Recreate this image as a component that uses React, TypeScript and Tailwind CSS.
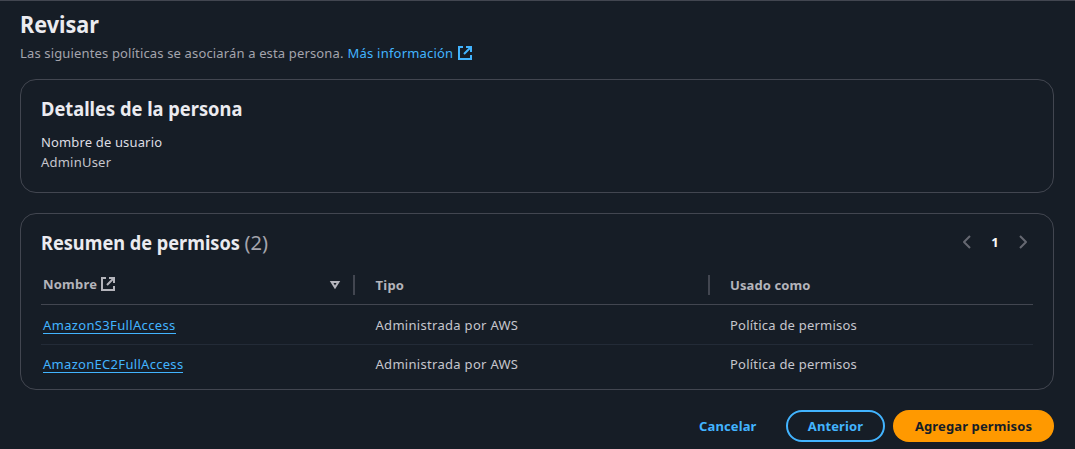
type IconProps = { className?: string };

function ExternalIcon({ className }: IconProps) {
  return (
    <svg viewBox="0 0 16 16" width="16" height="16" fill="none" stroke="currentColor" strokeWidth="2" className={className}>
      <path d="M9 2h5v5M7 9l6-6" />
      <path d="M14 10v4H2V2h4" />
    </svg>
  );
}

function Chevron({ flip = false }: { flip?: boolean }) {
  return (
    <svg viewBox="0 0 16 16" width="16" height="16" fill="none" stroke="currentColor" strokeWidth="2" strokeLinejoin="round" className={flip ? 'rotate-180' : ''}>
      <path d="M11 2 5 8l6 6" />
    </svg>
  );
}

const rows = [
  { name: 'AmazonS3FullAccess', box: 'h-10 border-b border-[#232b37] pt-px', tracking: 'tracking-[0.34px]', type: 'Administrada por AWS', usage: 'Política de permisos' },
  { name: 'AmazonEC2FullAccess', box: 'h-[38px]', tracking: 'tracking-[0.3px]', type: 'Administrada por AWS', usage: 'Política de permisos' },
];

const heading = 'font-bold text-[#ebebf0]';

export default function App() {
  return (
    <div className="h-[449px] overflow-hidden whitespace-nowrap border-t border-[#424650] bg-[#161d26] pl-5 pr-[21px] font-['Noto_Sans',sans-serif] text-[13px] leading-5 text-[#c6c6cd]">
      <h1 className={`${heading} h-[42px] w-fit origin-left scale-x-[0.9] pt-2 text-[24px] leading-[30px]`}>Revisar</h1>
      <p className="flex h-5 items-center text-[#a4a4ad]">
        <span className="tracking-[0.15px]">Las siguientes políticas se asociarán a esta persona.</span>
        <a className="ml-1 flex items-center gap-1 text-[#42b4ff]">
          <span className="tracking-[0.2px]">Más información</span>
          <ExternalIcon />
        </a>
      </p>

      <section className="mt-4 h-[114px] rounded-2xl border border-[#424650] px-5 pt-[17px]">
        <h2 className={`${heading} w-fit origin-left scale-x-[0.914] text-[20px] leading-6`}>Detalles de la persona</h2>
        <div className="mt-[11px] tracking-[0.15px] text-[#dedee3]">Nombre de usuario</div>
        <div className="tracking-[0.22px]">AdminUser</div>
      </section>

      <section className="mt-5 h-[177px] rounded-2xl border border-[#424650] px-5 pt-[17px]">
        <div className="flex h-6 items-center justify-between">
          <h2 className={`${heading} flex w-[230px] text-[20px] leading-6`}>
            <span className="w-[203.5px] shrink-0 origin-left scale-x-[0.908]">Resumen de permisos</span>
            <span className="font-normal text-[#a4a4ad]">(2)</span>
          </h2>
          <div className="flex items-center pb-0.5 pr-0.5 text-[#656871]">
            <Chevron />
            <span className="w-10 text-center font-bold text-[#f9f9fa]">1</span>
            <Chevron flip />
          </div>
        </div>
        <div className="mt-[9px] flex h-[41px] items-center border-b border-[#424650] pt-0.5 font-bold text-[#b4b4bb]">
          <div className="flex h-5 w-[314px] items-center justify-between border-r-2 border-[#424650] pl-0.5 pr-[10px]">
            <span className="flex -translate-y-px items-center gap-[3px] tracking-[0.2px]">
              Nombre <ExternalIcon />
            </span>
            <svg viewBox="0 0 16 16" width="16" height="16" fill="none" stroke="currentColor" strokeWidth="2">
              <path d="M4.6 5h6.8L8 10.3 4.6 5Z" />
            </svg>
          </div>
          <div className="w-[355px] border-r-2 border-[#424650] pl-[20.5px] tracking-[0.25px]">Tipo</div>
          <div className="pl-5 tracking-[0.1px]">Usado como</div>
        </div>
        {rows.map((row) => (
          <div key={row.name} className={`flex items-center ${row.box}`}>
            <div className="w-[334.5px] pl-0.5">
              <a className={`block w-fit border-b border-[#42b4ff] leading-4 text-[#42b4ff] ${row.tracking}`}>{row.name}</a>
            </div>
            <div className="w-[354.5px] tracking-[0.3px]">{row.type}</div>
            <div className="tracking-[0.22px]">{row.usage}</div>
          </div>
        ))}
      </section>

      <div className="mt-5 flex h-8 items-center justify-end font-bold tracking-[0.12px]">
        <button className="mr-[29.5px] text-[#42b4ff]">Cancelar</button>
        <button className="mr-2 h-8 w-[99px] rounded-full border-2 border-[#42b4ff] text-[#42b4ff]">Anterior</button>
        <button className="h-8 w-[161px] rounded-full bg-[#ff9900] text-[#161d26]">Agregar permisos</button>
      </div>
    </div>
  );
}
